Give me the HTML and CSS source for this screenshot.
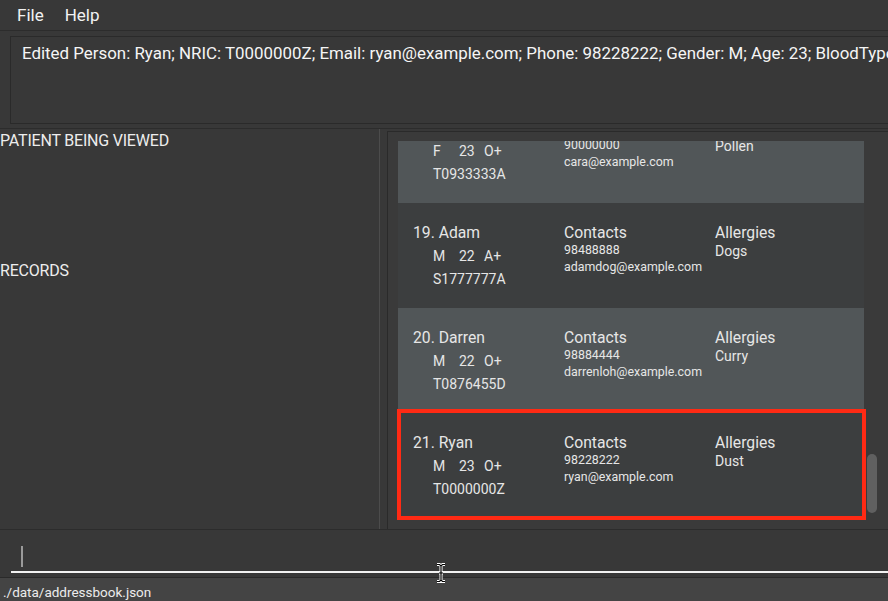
FILE: index.html
```html
<!DOCTYPE html>
<html>
<head>
<meta charset="utf-8">
<link rel="stylesheet" href="styles.css">
</head>
<body>
<div class="app">
  <div class="menubar">
    <span class="menu-item">File</span>
    <span class="menu-item">Help</span>
  </div>
  <div class="result-pane">
    <div class="result-box">Edited Person: Ryan; NRIC: T0000000Z; Email: ryan@example.com; Phone: 98228222; Gender: M; Age: 23; BloodType: O+; Allergies: Dust</div>
  </div>
  <div class="main">
    <div class="left">
      <div class="section-title viewed">PATIENT BEING VIEWED</div>
      <div class="section-title records">RECORDS</div>
    </div>
    <div class="divider"></div>
    <div class="right">
      <div class="list-frame">
        <div class="viewport">
          <div class="list-content">
            <div class="card odd">
              <div class="col">
                <div class="name">18. Cara</div>
                <div class="meta"><span class="g">F</span><span class="a">23</span><span>O+</span></div>
                <div class="nric">T0933333A</div>
              </div>
              <div class="col">
                <div class="head">Contacts</div>
                <div class="phone">90000000</div>
                <div class="email">cara@example.com</div>
              </div>
              <div class="col">
                <div class="head">Allergies</div>
                <div class="allergy">Pollen</div>
              </div>
            </div>
            <div class="card even">
              <div class="col">
                <div class="name">19. Adam</div>
                <div class="meta"><span class="g">M</span><span class="a">22</span><span>A+</span></div>
                <div class="nric">S1777777A</div>
              </div>
              <div class="col">
                <div class="head">Contacts</div>
                <div class="phone">98488888</div>
                <div class="email">adamdog@example.com</div>
              </div>
              <div class="col">
                <div class="head">Allergies</div>
                <div class="allergy">Dogs</div>
              </div>
            </div>
            <div class="card odd">
              <div class="col">
                <div class="name">20. Darren</div>
                <div class="meta"><span class="g">M</span><span class="a">22</span><span>O+</span></div>
                <div class="nric">T0876455D</div>
              </div>
              <div class="col">
                <div class="head">Contacts</div>
                <div class="phone">98884444</div>
                <div class="email">darrenloh@example.com</div>
              </div>
              <div class="col">
                <div class="head">Allergies</div>
                <div class="allergy">Curry</div>
              </div>
            </div>
            <div class="card even selected">
              <div class="col">
                <div class="name">21. Ryan</div>
                <div class="meta"><span class="g">M</span><span class="a">23</span><span>O+</span></div>
                <div class="nric">T0000000Z</div>
              </div>
              <div class="col">
                <div class="head">Contacts</div>
                <div class="phone">98228222</div>
                <div class="email">ryan@example.com</div>
              </div>
              <div class="col">
                <div class="head">Allergies</div>
                <div class="allergy">Dust</div>
              </div>
            </div>
          </div>
        </div>
        <div class="scrolltrack"><div class="thumb"></div></div>
      </div>
    </div>
  </div>
  <div class="command">
    <div class="command-field"><span class="caret"></span></div>
  </div>
  <div class="status">./data/addressbook.json</div>
  <svg class="mouse" width="12" height="20" viewBox="0 0 12 20">
    <path d="M2 1.5 H4.5 L6 3 L7.5 1.5 H10 M6 3 V17 M2 18.5 H4.5 L6 17 L7.5 18.5 H10 M4 10 H8" fill="none" stroke="#fff" stroke-width="3"/>
    <path d="M2 1.5 H4.5 L6 3 L7.5 1.5 H10 M6 3 V17 M2 18.5 H4.5 L6 17 L7.5 18.5 H10 M4 10 H8" fill="none" stroke="#000" stroke-width="1.2"/>
  </svg>
</div>
</body>
</html>
```
FILE: styles.css
```css
* { box-sizing: border-box; }
html, body { margin: 0; padding: 0; }
body {
  background: #383838;
  font-family: Roboto, "Noto Sans", sans-serif;
  color: #ececec;
  overflow: hidden;
}
.app {
  position: relative;
  width: 888px;
  height: 601px;
  display: flex;
  flex-direction: column;
  overflow: hidden;
}
.menubar {
  height: 31px;
  flex: none;
  background: #383838;
  border-bottom: 1px solid #2c2c2c;
  display: flex;
  align-items: center;
  padding-left: 17px;
  gap: 21px;
  font-size: 17px;
  color: #f2f2f2;
}
.result-pane {
  height: 98px;
  flex: none;
  padding: 5px 0 0 10px;
  border-bottom: 1px solid #2c2c2c;
  overflow: hidden;
}
.result-box {
  width: 920px;
  height: 88px;
  border: 1px solid #2a2a2a;
  padding: 6px 0 0 11px;
  font-size: 16.9px;
  color: #f5f5f5;
  white-space: nowrap;
  line-height: 20px;
}
.main {
  flex: none;
  height: 401px;
  display: flex;
  border-bottom: 1px solid #2c2c2c;
}
.left {
  width: 379px;
  flex: none;
  display: flex;
  flex-direction: column;
  font-size: 16px;
  color: #ededed;
}
.section-title { line-height: 20px; letter-spacing: -0.2px; }
.viewed { margin-top: 2px; height: 130px; }
.divider {
  width: 1px;
  flex: none;
  background: #4c4c4c;
}
.right {
  flex: 1;
  padding: 2px 0 0 7px;
  display: flex;
}
.list-frame {
  flex: 1;
  border-left: 1px solid #2a2a2a;
  border-top: 1px solid #2a2a2a;
  padding: 9px 0 0 10px;
  display: flex;
  background: #3a3a3a;
}
.viewport {
  width: 470px;
  height: 386px;
  overflow: hidden;
  flex: none;
  padding: 0 3px 0 1px;
  margin-left: -1px;
}
.list-content {
  margin-top: -43px;
}
.card {
  height: 105px;
  display: grid;
  grid-template-columns: 151px 151px 1fr;
  padding: 19px 0 0 15px;
  color: #e6e6e6;
}
.card.odd { background: #515658; }
.card.even { background: #3c3e3f; }
.card.selected {
  height: 111px;
  margin: -4px -2px 0 -1px;
  border: 4px solid #ff2a14;
  padding: 19px 0 0 12px;
}
.name, .head {
  font-size: 15.7px;
  line-height: 22px;
}
.meta {
  margin-top: 1px;
  padding-left: 20px;
  font-size: 14px;
  line-height: 23px;
}
.meta span { display: inline-block; }
.meta .g { width: 26px; }
.meta .a { width: 25px; }
.nric {
  padding-left: 20px;
  font-size: 14px;
  line-height: 23px;
}
.phone, .email {
  font-size: 12.4px;
  line-height: 17px;
}
.phone { margin-top: -3px; }
.allergy {
  font-size: 14px;
  line-height: 18px;
  margin-top: -2px;
}
.scrolltrack {
  width: 21px;
  position: relative;
}
.thumb {
  position: absolute;
  left: 0;
  top: 313px;
  width: 10px;
  height: 59px;
  border-radius: 5px;
  background: #606060;
}
.command {
  flex: none;
  height: 48px;
  padding: 0 0 0 11px;
  display: flex;
  flex-direction: column;
  justify-content: flex-end;
  border-bottom: 1px solid #2a2a2a;
}
.command-field {
  height: 38px;
  border-bottom: 2px solid #f2f2f2;
  padding: 11px 0 0 10px;
  margin-bottom: 4px;
}
.caret {
  display: block;
  width: 1.5px;
  height: 21px;
  background: #9a9a9a;
}
.status {
  flex: 1;
  background: #444444;
  font-size: 13.5px;
  padding: 4px 0 0 3px;
  color: #ececec;
  line-height: 20px;
}
.mouse {
  position: absolute;
  left: 435px;
  top: 563px;
}
```
